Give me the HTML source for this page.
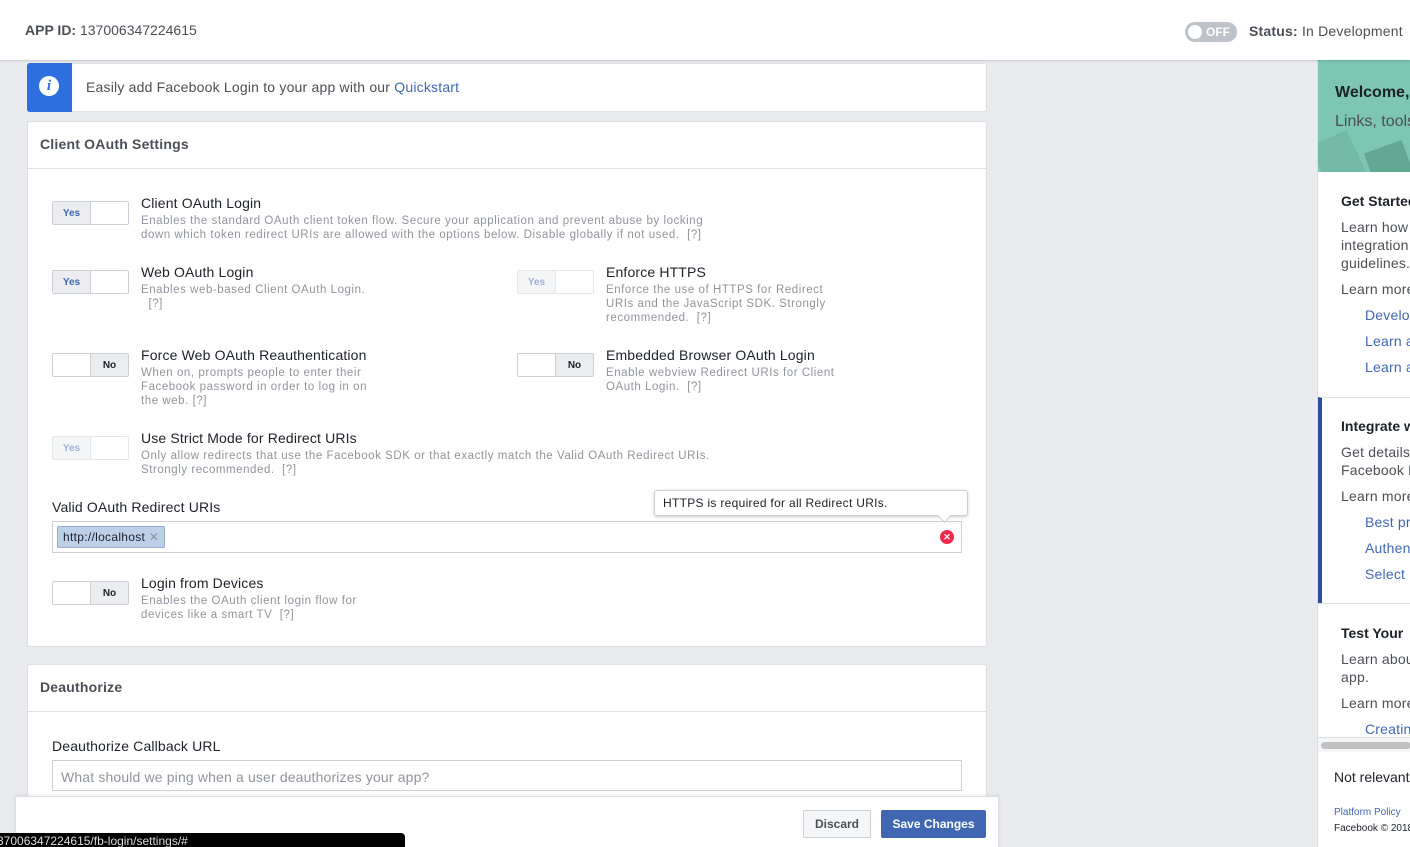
<!DOCTYPE html>
<html><head><meta charset="utf-8"><style>
*{box-sizing:border-box;margin:0;padding:0}
html,body{width:1410px;height:847px;overflow:hidden}
body{background:#e9ebee;font-family:"Liberation Sans",Helvetica,sans-serif;position:relative;color:#1d2129}
.a{position:absolute}
.hdr{left:0;top:0;width:1410px;height:60px;background:#fff;box-shadow:0 1px 2px rgba(0,0,0,.15);z-index:2}
.card{background:#fff;border:1px solid #dddfe2;border-radius:3px}
.tg{width:77px;height:24px;border:1px solid #ccd0d5;border-radius:2px;background:#fff;display:flex;font-size:10px;font-weight:bold}
.tg span{width:38px;display:flex;align-items:center;justify-content:center}
.tg .on{background:#ebedf0;color:#4267b2;border-right:1px solid #ccd0d5}
.tg .off{background:#ebedf0;color:#1d2129;border-left:1px solid #ccd0d5;margin-left:auto}
.tg.dis{opacity:.5}
.t{font-size:14px;color:#1d2129;letter-spacing:.15px}
.d{font-size:11.5px;color:#90949c;line-height:14px;letter-spacing:.55px}
.rp{font-size:14px;color:#4b4f56;line-height:18px;letter-spacing:.2px}
.lk{color:#4267b2 !important}
</style></head><body>
<div class="a hdr">
 <div class="a" style="left:25px;top:22px;font-size:14px;color:#4b4f56"><b>APP ID:</b> 137006347224615</div>
 <div class="a" style="left:1185px;top:22px;width:52px;height:20px;border-radius:10px;background:#bec2c9"><div class="a" style="left:3px;top:3px;width:14px;height:14px;border-radius:7px;background:#fff"></div><div class="a" style="left:21px;top:3px;font-size:12px;font-weight:bold;color:#fff">OFF</div></div>
 <div class="a" style="left:1249px;top:23px;font-size:14px;color:#4b4f56;letter-spacing:.2px"><b>Status:</b> In Development</div>
</div>

<div class="a card" style="left:27px;top:63px;width:960px;height:49px;border-radius:0 3px 3px 0">
 <div class="a" style="left:-1px;top:-1px;width:45px;height:49px;background:#2d6fde;border-radius:3px 0 0 3px"><div class="a" style="left:12px;top:13px;width:20px;height:20px;border-radius:50%;background:#fff;color:#2d6fde;font:italic bold 15px 'Liberation Serif',serif;text-align:center;line-height:20px">i</div></div>
 <div class="a" style="left:58px;top:15px;font-size:14px;color:#4b4f56;letter-spacing:.2px">Easily add Facebook Login to your app with our <span class="lk">Quickstart</span></div>
</div>

<div class="a card" style="left:27px;top:121px;width:960px;height:526px">
 <div class="a" style="left:12px;top:14px;font-size:14px;font-weight:bold;color:#4b4f56;letter-spacing:.2px">Client OAuth Settings</div>
 <div class="a" style="left:0;top:46px;width:958px;border-top:1px solid #dddfe2"></div>
</div>

<div class="a tg" style="left:52px;top:201px"><span class="on">Yes</span></div>
<div class="a t" style="left:141px;top:195px">Client OAuth Login</div>
<div class="a d" style="left:141px;top:214px">Enables the standard OAuth client token flow. Secure your application and prevent abuse by locking<br>down which token redirect URIs are allowed with the options below. Disable globally if not used. &nbsp;[?]</div>

<div class="a tg" style="left:52px;top:270px"><span class="on">Yes</span></div>
<div class="a t" style="left:141px;top:264px">Web OAuth Login</div>
<div class="a d" style="left:141px;top:283px">Enables web-based Client OAuth Login.<br>&nbsp; [?]</div>

<div class="a tg dis" style="left:517px;top:270px"><span class="on">Yes</span></div>
<div class="a t" style="left:606px;top:264px">Enforce HTTPS</div>
<div class="a d" style="left:606px;top:283px">Enforce the use of HTTPS for Redirect<br>URIs and the JavaScript SDK. Strongly<br>recommended. &nbsp;[?]</div>

<div class="a tg" style="left:52px;top:353px"><span class="off">No</span></div>
<div class="a t" style="left:141px;top:347px">Force Web OAuth Reauthentication</div>
<div class="a d" style="left:141px;top:366px">When on, prompts people to enter their<br>Facebook password in order to log in on<br>the web. [?]</div>

<div class="a tg" style="left:517px;top:353px"><span class="off">No</span></div>
<div class="a t" style="left:606px;top:347px">Embedded Browser OAuth Login</div>
<div class="a d" style="left:606px;top:366px">Enable webview Redirect URIs for Client<br>OAuth Login. &nbsp;[?]</div>

<div class="a tg dis" style="left:52px;top:436px"><span class="on">Yes</span></div>
<div class="a t" style="left:141px;top:430px">Use Strict Mode for Redirect URIs</div>
<div class="a d" style="left:141px;top:449px">Only allow redirects that use the Facebook SDK or that exactly match the Valid OAuth Redirect URIs.<br>Strongly recommended. &nbsp;[?]</div>

<div class="a t" style="left:52px;top:499px">Valid OAuth Redirect URIs</div>
<div class="a" style="left:52px;top:521px;width:910px;height:32px;border:1px solid #ccd0d5;background:#fff">
 <div class="a" style="left:4px;top:4px;height:22px;padding:0 5px;background:#bcd0e8;border:1px solid #97abc8;border-radius:2px;font-size:12px;line-height:20px;color:#1d2129;letter-spacing:.3px">http://localhost <span style="color:#90949c">✕</span></div>
 <div class="a" style="left:887px;top:8px;width:14px;height:14px;border-radius:50%;background:#f02849;color:#fff;font-size:9px;font-weight:bold;text-align:center;line-height:14px">✕</div>
</div>
<div class="a" style="left:654px;top:490px;width:314px;height:26px;background:#fff;border:1px solid #ccd0d5;border-radius:3px;box-shadow:0 1px 3px rgba(0,0,0,.2);font-size:12px;line-height:24px;padding-left:8px;letter-spacing:.3px">HTTPS is required for all Redirect URIs.</div>
<div class="a" style="left:940px;top:512px;width:9px;height:9px;background:#fff;border-right:1px solid #ccd0d5;border-bottom:1px solid #ccd0d5;transform:rotate(45deg)"></div>

<div class="a tg" style="left:52px;top:581px"><span class="off">No</span></div>
<div class="a t" style="left:141px;top:575px">Login from Devices</div>
<div class="a d" style="left:141px;top:594px">Enables the OAuth client login flow for<br>devices like a smart TV &nbsp;[?]</div>

<div class="a card" style="left:27px;top:664px;width:960px;height:180px">
 <div class="a" style="left:12px;top:14px;font-size:14px;font-weight:bold;color:#4b4f56;letter-spacing:.2px">Deauthorize</div>
 <div class="a" style="left:0;top:46px;width:958px;border-top:1px solid #dddfe2"></div>
</div>
<div class="a t" style="left:52px;top:738px">Deauthorize Callback URL</div>
<div class="a" style="left:52px;top:760px;width:910px;height:31px;border:1px solid #ccd0d5;background:#fff;font-size:14px;color:#90949c;padding:8px 8px;letter-spacing:.15px">What should we ping when a user deauthorizes your app?</div>

<div class="a" style="left:15px;top:796px;width:984px;height:60px;background:#fff;border:1px solid #dddfe2;box-shadow:0 -1px 3px rgba(0,0,0,.08)">
 <div class="a" style="left:787px;top:13px;width:68px;height:28px;background:#f5f6f7;border:1px solid #ccd0d5;border-radius:2px;font-size:12px;font-weight:bold;color:#4b4f56;text-align:center;line-height:26px">Discard</div>
 <div class="a" style="left:865px;top:13px;width:105px;height:28px;background:#4267b2;border:1px solid #4267b2;border-radius:2px;font-size:12px;font-weight:bold;color:#fff;text-align:center;line-height:26px">Save Changes</div>
</div>
<div class="a" style="left:0;top:833px;width:405px;height:14px;background:#000;border-radius:0 4px 0 0;color:#ddd;font-size:12px;line-height:16px;white-space:nowrap;overflow:hidden;text-indent:-3px">37006347224615/fb-login/settings/#</div>

<div class="a" style="left:1317px;top:60px;width:93px;height:787px;background:#fff;border-left:1px solid #dddfe2;overflow:hidden;white-space:nowrap">
 <div class="a" style="left:0;top:0;width:93px;height:112px;background:#7cc6b3;overflow:hidden">
  <div class="a" style="left:5px;top:75px;width:40px;height:70px;background:#72b9a6;transform:rotate(-25deg)"></div>
  <div class="a" style="left:55px;top:85px;width:40px;height:60px;background:#62a893;transform:rotate(-20deg)"></div>
  <div class="a" style="left:17px;top:24px;font-size:16px;font-weight:bold;color:#1d2129">Welcome,</div>
  <div class="a" style="left:17px;top:53px;font-size:16px;color:#4b4f56">Links, tools</div>
 </div>
 <div class="a" style="left:23px;top:133px;font-size:14px;font-weight:bold">Get Started</div>
 <div class="a rp" style="left:23px;top:158px">Learn how<br>integration<br>guidelines.</div>
 <div class="a rp" style="left:23px;top:220px">Learn more</div>
 <div class="a rp lk" style="left:47px;top:246px">Develo</div>
 <div class="a rp lk" style="left:47px;top:272px">Learn a</div>
 <div class="a rp lk" style="left:47px;top:298px">Learn a</div>
 <div class="a" style="left:0;top:337px;width:93px;height:206px;background:#fff;border-top:1px solid #dddfe2;border-left:4px solid #2b4ea0"></div>
 <div class="a" style="left:23px;top:358px;font-size:14px;font-weight:bold">Integrate w</div>
 <div class="a rp" style="left:23px;top:383px">Get details<br>Facebook L</div>
 <div class="a rp" style="left:23px;top:427px">Learn more</div>
 <div class="a rp lk" style="left:47px;top:453px">Best pr</div>
 <div class="a rp lk" style="left:47px;top:479px">Authen</div>
 <div class="a rp lk" style="left:47px;top:505px">Select</div>
 <div class="a" style="left:0;top:543px;width:93px;border-top:1px solid #dddfe2"></div>
 <div class="a" style="left:23px;top:565px;font-size:14px;font-weight:bold">Test Your</div>
 <div class="a rp" style="left:23px;top:590px">Learn abou<br>app.</div>
 <div class="a rp" style="left:23px;top:634px">Learn more</div>
 <div class="a rp lk" style="left:47px;top:660px">Creatin</div>
 <div class="a" style="left:0;top:677px;width:93px;height:15px;background:#f5f6f7;border-top:1px solid #dddfe2"><div class="a" style="left:3px;top:4px;width:90px;height:7px;border-radius:4px;background:#c1c1c1"></div></div>
 <div class="a" style="left:16px;top:709px;font-size:14px;color:#1d2129">Not relevant</div>
 <div class="a lk" style="left:16px;top:747px;font-size:10px">Platform Policy</div>
 <div class="a" style="left:16px;top:763px;font-size:10px;color:#1d2129">Facebook © 2018</div>
</div>
</body></html>
